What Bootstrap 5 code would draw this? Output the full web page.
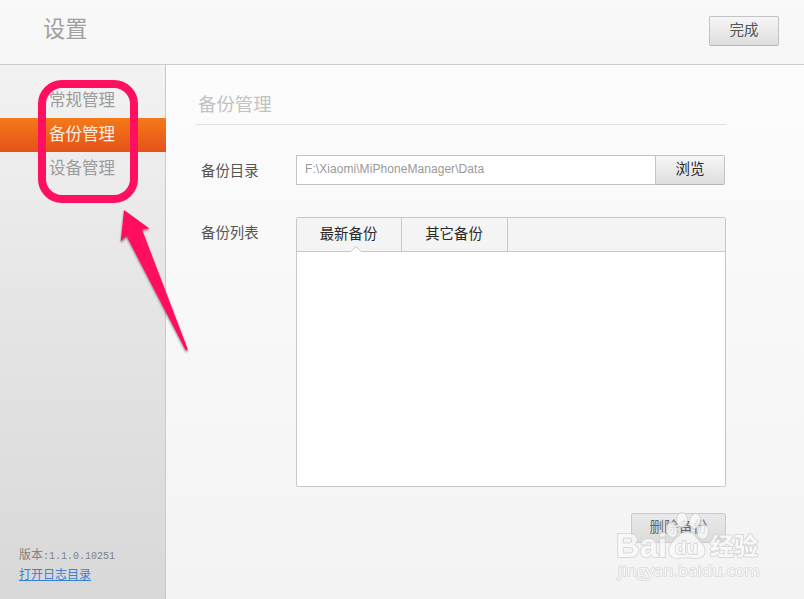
<!DOCTYPE html>
<html lang="zh-CN">
<head>
<meta charset="utf-8">
<meta name="viewport" content="width=device-width, initial-scale=1">
<title>设置</title>
<link rel="stylesheet" href="https://cdn.jsdelivr.net/npm/bootstrap@5.3.0/dist/css/bootstrap.min.css">
<style>
html,body{height:100%}
body{font-family:"Liberation Sans","Noto Sans CJK SC",sans-serif;font-size:14.4px;line-height:20px;color:#555;overflow:hidden;background:#f7f7f7}
.window{width:804px;height:599px}
.topbar{height:65px;background:linear-gradient(#f9f9f9,#f6f6f6);border-bottom:1px solid #ccc;padding:0 25px 0 43px}
.app-title{font-size:22.3px;line-height:30px;color:#a0a0a0;font-weight:400;margin:15px 0 0}
.soft-btn{--bs-btn-font-size:14.5px;--bs-btn-line-height:20px;--bs-btn-padding-x:0;height:30px;padding-top:3px;padding-bottom:5px;border-radius:2px;border:1px solid #c3c3c3;border-bottom-color:#b5b5b5;background:linear-gradient(#f6f6f6,#dedede);color:#555}
.done-btn{width:70px;margin-top:16px}
.sidebar{width:166px;background:linear-gradient(#f2f2f2,#e5e5e5 45%,#d8d8d8);border-right:1px solid #c9c9c9;padding-top:19px}
.sidebar .nav-link{height:34px;padding:0 0 0 49px;font-size:16.5px;line-height:33px;color:#9c9c9c;width:166px}
.sidebar .nav-link.active{background:linear-gradient(#f47a19,#e5511a);color:#ffeee2}
.version{padding:0 0 15px 19px;font-size:12px;line-height:18px;color:#828282}
.version-no{font-family:"Liberation Mono","Noto Sans CJK SC",monospace;font-size:10px}
.version a{color:#3a80d2}
.content{background:linear-gradient(#fcfcfc,#f3f3f3);padding:26px 78px 0 30px}
.section-title{font-size:18.4px;line-height:28px;color:#c2c2c2;font-weight:400;height:34px;border-bottom:1px solid #dfdfdf;margin:0;padding-left:2px}
.field-label{width:100px;padding-left:5px;flex:none}
.path-row{margin-top:30px;height:30px}
.path-row .field-label{padding-top:2px}
.path-row .input-group{width:429px}
.path-input{border:1px solid #c2c2c2;border-right:0;border-radius:0;height:30px;padding:0 8px 3px;font-size:12px;letter-spacing:.06px;color:#999;background:#fff}
.path-input:focus{box-shadow:none}
.browse-btn{width:70px;border-radius:0 2px 2px 0;color:#2a2a2a}
.list-row{margin-top:32px}
.list-row>.field-label{padding-top:6px}
.list-panel{width:430px;height:270px;border:1px solid #c8c8c8;border-radius:2px;background:#fff}
.list-tabs{height:34px;background:#f4f4f4;border-bottom:1px solid #c8c8c8}
.list-tabs .nav-link{height:33px;padding:0 1px 0 0;width:106px;line-height:33px;text-align:center;color:#2a2a2a;border-right:1px solid #c8c8c8}
.list-tabs .nav-link:first-child{width:105px}
.notch{left:53px;top:28px}
.delete-btn{width:95px;margin-top:26px;background:linear-gradient(#e9e9e9,#dcdcdc);border-color:#cacaca;color:#666}
.marker{left:38px;top:80px;width:100px;height:123px;border:8px solid #ff0f5f;border-radius:24px}
.overlay{left:0;top:0;pointer-events:none}
</style>
</head>
<body>
<div class="window d-flex flex-column position-relative">
  <header class="topbar d-flex justify-content-between align-items-start flex-shrink-0">
    <h1 class="app-title">设置</h1>
    <button type="button" class="btn soft-btn done-btn">完成</button>
  </header>
  <div class="d-flex flex-grow-1">
    <aside class="sidebar d-flex flex-column justify-content-between flex-shrink-0">
      <nav class="nav flex-column">
        <a class="nav-link" href="#">常规管理</a>
        <a class="nav-link active" href="#">备份管理</a>
        <a class="nav-link" href="#">设备管理</a>
      </nav>
      <div class="version">
        <div>版本<span class="version-no">:1.1.0.10251</span></div>
        <a href="#">打开日志目录</a>
      </div>
    </aside>
    <main class="content flex-grow-1">
      <h2 class="section-title">备份管理</h2>
      <div class="path-row d-flex align-items-center">
        <label class="field-label" for="path">备份目录</label>
        <div class="input-group flex-nowrap">
          <input id="path" class="form-control path-input" type="text" value="F:\Xiaomi\MiPhoneManager\Data">
          <button type="button" class="btn soft-btn browse-btn">浏览</button>
        </div>
      </div>
      <div class="list-row d-flex">
        <div class="field-label">备份列表</div>
        <section class="list-panel">
          <div class="list-tabs nav position-relative">
            <a class="nav-link" href="#">最新备份</a>
            <a class="nav-link" href="#">其它备份</a>
            <svg class="notch position-absolute" width="12" height="7" viewBox="0 0 12 7"><path d="M0 7V6L6 .7 12 6v1z" fill="#fff"/><path d="M.5 5.5 6 .7l5.500 4.800" fill="none" stroke="#c8c8c8"/></svg>
          </div>
        </section>
      </div>
      <div class="d-flex justify-content-end"><button type="button" class="btn soft-btn delete-btn">删除备份</button></div>
    </main>
  </div>
  <div class="marker position-absolute"></div>
  <svg class="overlay position-absolute" width="804" height="599" viewBox="0 0 804 599">
    <defs><filter id="sh" x="-20%" y="-10%" width="150%" height="130%"><feDropShadow dx="0" dy="1.500" stdDeviation="1" flood-color="#000" flood-opacity=".5"/></filter></defs>
    <path filter="url(#sh)" fill="#ff0f5f" d="M124 210 149.500 228.500 142 229.500 187.500 348.500Q187.500 351.500 185.500 350L126.500 236 120.700 241.500Z"/>
    <g fill="#fafafa" stroke="#d2d2d2" stroke-width="2" paint-order="stroke" stroke-linejoin="round" opacity=".8">
      <ellipse cx="672" cy="530" rx="5" ry="7" transform="rotate(-15 672 530)"/>
      <ellipse cx="682" cy="520" rx="5" ry="7"/>
      <ellipse cx="695" cy="521" rx="5" ry="7" transform="rotate(15 695 521)"/>
      <ellipse cx="703" cy="532" rx="5" ry="7" transform="rotate(12 703 532)"/>
      <path d="M687 532c6 0 9 6 13 10 8 8 5 16-4 16-6-1-12-1-18 0-9 0-12-8-5-16 5-5 8-10 14-10z"/>
      <text x="616" y="557" font-family="Liberation Sans, sans-serif" font-weight="700" font-size="33" textLength="51" lengthAdjust="spacingAndGlyphs">Bai</text>
      <text x="710" y="555" font-family="Noto Sans CJK SC, sans-serif" font-weight="700" font-size="24" textLength="48">经验</text>
      <text x="618" y="576" font-family="Open Sans, sans-serif" font-size="15" stroke-width="1.500" textLength="142" lengthAdjust="spacingAndGlyphs">jingyan.baidu.com</text>
      <text x="675" y="554" font-family="Liberation Sans, sans-serif" font-weight="700" font-size="19" textLength="23" lengthAdjust="spacingAndGlyphs">du</text>
    </g>
  </svg>
</div>
<script src="https://cdn.jsdelivr.net/npm/bootstrap@5.3.0/dist/js/bootstrap.bundle.min.js"></script>
</body>
</html>
